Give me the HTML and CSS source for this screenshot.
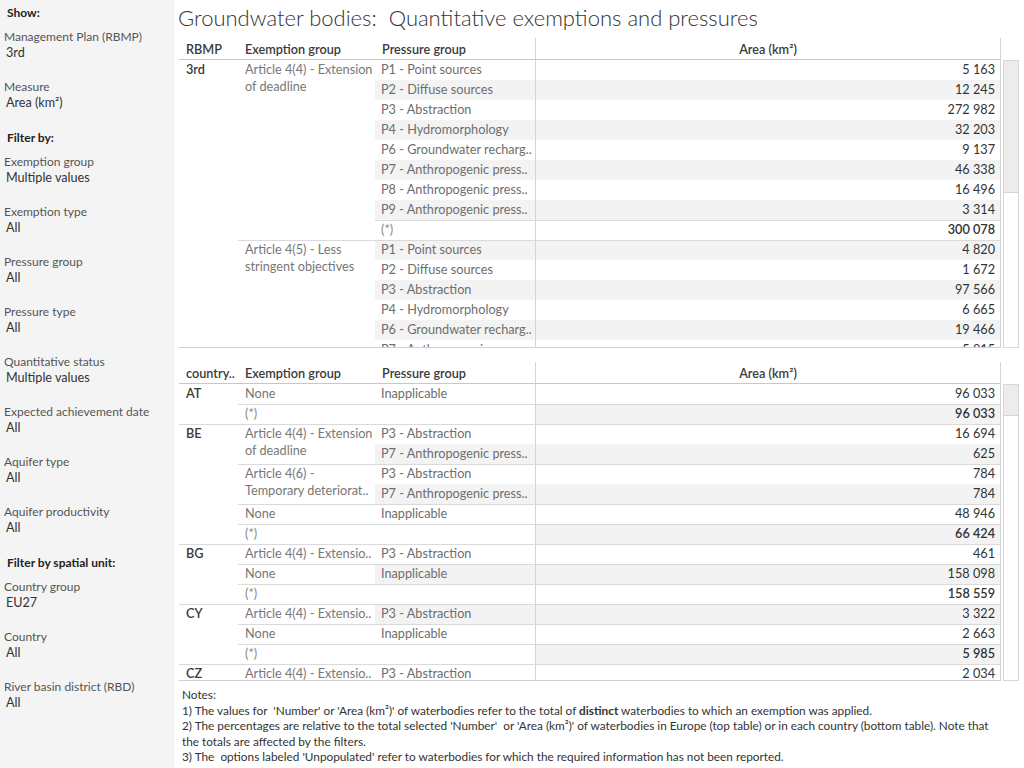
FILE: index.html
```html
<!DOCTYPE html>
<html lang="en">
<head>
  <meta charset="UTF-8">
  <meta name="viewport" content="width=device-width, initial-scale=1.0">
  <title>Groundwater bodies: Quantitative exemptions and pressures</title>
  <link rel="stylesheet" href="styles.css">
</head>
<body>
<aside class="filters">
  <div class="filters-heading">Show:</div>
  <div class="filter"><div class="filter-label">Management Plan (RBMP)</div><div class="filter-value">3rd</div></div>
  <div class="filter"><div class="filter-label">Measure</div><div class="filter-value">Area (km²)</div></div>

  <div class="filters-heading">Filter by:</div>
  <div class="filter"><div class="filter-label">Exemption group</div><div class="filter-value">Multiple values</div></div>
  <div class="filter"><div class="filter-label">Exemption type</div><div class="filter-value">All</div></div>
  <div class="filter"><div class="filter-label">Pressure group</div><div class="filter-value">All</div></div>
  <div class="filter"><div class="filter-label">Pressure type</div><div class="filter-value">All</div></div>
  <div class="filter"><div class="filter-label">Quantitative status</div><div class="filter-value">Multiple values</div></div>
  <div class="filter"><div class="filter-label">Expected achievement date</div><div class="filter-value">All</div></div>
  <div class="filter"><div class="filter-label">Aquifer type</div><div class="filter-value">All</div></div>
  <div class="filter"><div class="filter-label">Aquifer productivity</div><div class="filter-value">All</div></div>

  <div class="filters-heading">Filter by spatial unit:</div>
  <div class="filter"><div class="filter-label">Country group</div><div class="filter-value">EU27</div></div>
  <div class="filter"><div class="filter-label">Country</div><div class="filter-value">All</div></div>
  <div class="filter"><div class="filter-label">River basin district (RBD)</div><div class="filter-value">All</div></div>
</aside>

<main class="dashboard">
  <h1 class="title">Groundwater bodies:&nbsp; Quantitative exemptions and pressures</h1>

  <!-- Europe total, by plan / exemption / pressure -->
  <section class="sheet">
    <div class="sheet-head">
      <div class="hd">RBMP</div>
      <div class="hd">Exemption group</div>
      <div class="hd">Pressure group</div>
      <div class="hd hd-val">Area (km²)</div>
    </div>
    <div class="sheet-body">
      <div class="viewport viewport-top">
        <div class="grid">
          <div class="c dim" style="grid-row: span 20">3rd</div>

          <div class="c ex" style="grid-row: span 9">Article 4(4) - Extension<br>of deadline</div>
          <div class="c pr">P1 - Point sources</div><div class="c val">5 163</div>
          <div class="c pr band">P2 - Diffuse sources</div><div class="c val band">12 245</div>
          <div class="c pr">P3 - Abstraction</div><div class="c val">272 982</div>
          <div class="c pr band">P4 - Hydromorphology</div><div class="c val band">32 203</div>
          <div class="c pr">P6 - Groundwater recharg..</div><div class="c val">9 137</div>
          <div class="c pr band">P7 - Anthropogenic press..</div><div class="c val band">46 338</div>
          <div class="c pr">P8 - Anthropogenic press..</div><div class="c val">16 496</div>
          <div class="c pr band">P9 - Anthropogenic press..</div><div class="c val band">3 314</div>
          <div class="c pr top muted">(*)</div><div class="c val top tot">300 078</div>

          <div class="c ex top" style="grid-row: span 9">Article 4(5) - Less<br>stringent objectives</div>
          <div class="c pr top band">P1 - Point sources</div><div class="c val top band">4 820</div>
          <div class="c pr">P2 - Diffuse sources</div><div class="c val">1 672</div>
          <div class="c pr band">P3 - Abstraction</div><div class="c val band">97 566</div>
          <div class="c pr">P4 - Hydromorphology</div><div class="c val">6 665</div>
          <div class="c pr band">P6 - Groundwater recharg..</div><div class="c val band">19 466</div>
          <div class="c pr">P7 - Anthropogenic press..</div><div class="c val">5 815</div>
          <div class="c pr band">P8 - Anthropogenic press..</div><div class="c val band">2 104</div>
          <div class="c pr">P9 - Anthropogenic press..</div><div class="c val">412</div>
          <div class="c pr top band muted">(*)</div><div class="c val top band tot">118 620</div>

          <div class="c ex top" style="grid-row: span 2">Article 4(6) -<br>Temporary deteriorat..</div>
          <div class="c pr top">P3 - Abstraction</div><div class="c val top">784</div>
          <div class="c pr top band muted">(*)</div><div class="c val top band tot">784</div>
        </div>
      </div>
      <div class="scrollbar"><div class="thumb thumb-top"></div></div>
    </div>
  </section>

  <!-- Same figures broken down per country -->
  <section class="sheet sheet-country">
    <div class="sheet-head">
      <div class="hd">country..</div>
      <div class="hd">Exemption group</div>
      <div class="hd">Pressure group</div>
      <div class="hd hd-val">Area (km²)</div>
    </div>
    <div class="sheet-body">
      <div class="viewport viewport-country">
        <div class="grid">
          <div class="c dim" style="grid-row: span 2">AT</div>
          <div class="c ex">None</div><div class="c pr">Inapplicable</div><div class="c val">96 033</div>
          <div class="c ex top muted">(*)</div><div class="c pr top"></div><div class="c val top band tot">96 033</div>

          <div class="c dim top" style="grid-row: span 6">BE</div>
          <div class="c ex top" style="grid-row: span 2">Article 4(4) - Extension<br>of deadline</div>
          <div class="c pr top">P3 - Abstraction</div><div class="c val top">16 694</div>
          <div class="c pr band">P7 - Anthropogenic press..</div><div class="c val band">625</div>
          <div class="c ex top" style="grid-row: span 2">Article 4(6) -<br>Temporary deteriorat..</div>
          <div class="c pr top">P3 - Abstraction</div><div class="c val top">784</div>
          <div class="c pr band">P7 - Anthropogenic press..</div><div class="c val band">784</div>
          <div class="c ex top">None</div><div class="c pr top">Inapplicable</div><div class="c val top">48 946</div>
          <div class="c ex top muted">(*)</div><div class="c pr top"></div><div class="c val top band tot">66 424</div>

          <div class="c dim top" style="grid-row: span 3">BG</div>
          <div class="c ex top">Article 4(4) - Extensio..</div><div class="c pr top">P3 - Abstraction</div><div class="c val top">461</div>
          <div class="c ex top">None</div><div class="c pr top band">Inapplicable</div><div class="c val top band">158 098</div>
          <div class="c ex top muted">(*)</div><div class="c pr top"></div><div class="c val top tot">158 559</div>

          <div class="c dim top" style="grid-row: span 3">CY</div>
          <div class="c ex top">Article 4(4) - Extensio..</div><div class="c pr top band">P3 - Abstraction</div><div class="c val top band">3 322</div>
          <div class="c ex top">None</div><div class="c pr top">Inapplicable</div><div class="c val top">2 663</div>
          <div class="c ex top muted">(*)</div><div class="c pr top"></div><div class="c val top band tot">5 985</div>

          <div class="c dim top" style="grid-row: span 3">CZ</div>
          <div class="c ex top">Article 4(4) - Extensio..</div><div class="c pr top">P3 - Abstraction</div><div class="c val top">2 034</div>
          <div class="c ex top">None</div><div class="c pr top band">Inapplicable</div><div class="c val top band">1 120</div>
          <div class="c ex top muted">(*)</div><div class="c pr top"></div><div class="c val top tot">3 154</div>
        </div>
      </div>
      <div class="scrollbar"><div class="thumb thumb-country"></div></div>
    </div>
  </section>

  <div class="notes">
    <p>Notes:</p>
    <p>1) The values for &nbsp;'Number' or 'Area (km²)' of waterbodies refer to the total of <b>distinct</b> waterbodies to which an exemption was applied.</p>
    <p>2) The percentages are relative to the total selected 'Number' &nbsp;or 'Area (km²)' of waterbodies in Europe (top table) or in each country (bottom table). Note that<br>the totals are affected by the filters.</p>
    <p>3) The &nbsp;options labeled 'Unpopulated' refer to waterbodies for which the required information has not been reported.</p>
  </div>
</main>
</body>
</html>
```

FILE: styles.css
```css
body {
  margin: 0;
  height: 768px;
  overflow: hidden;
  display: flex;
  font-family: Lato, 'Liberation Sans', sans-serif;
  font-size: 12px;
  color: #333;
  background: #fff;
}

/* Left filter panel */
.filters {
  width: 175px;
  flex-shrink: 0;
  background: #f4f4f4;
  box-sizing: border-box;
  padding-left: 4px;
}

.filters-heading {
  padding: 6px 0 3px 3px;
  line-height: 16px;
  font-weight: bold;
  color: #222;
}

.filters-heading:first-child {
  padding-top: 5px;
}

.filter {
  padding: 5px 0 13px;
  line-height: 16px;
}

.filter-label {
  color: #555;
}

.filter-value {
  padding-left: 2px;
  font-size: 12.6px;
  color: #333;
}

/* Main dashboard area */
.dashboard {
  flex: 1;
  padding: 0 5px 0 4px;
  min-width: 0;
}

.title {
  margin: 0 0 0 -1px;
  height: 38px;
  line-height: 36px;
  font-size: 22px;
  font-weight: 300;
  color: #333;
  white-space: nowrap;
}

.sheet-country {
  margin-top: 14px;
}

.sheet-head,
.grid {
  display: grid;
  grid-template-columns: 59px 137px 160px 1fr;
}

.sheet-head {
  margin-right: 18px;
  height: 21px;
  border-bottom: 1px solid #c8c8c8;
}

.hd {
  padding: 3px 0 0 7px;
  line-height: 17px;
  font-size: 12.7px;
  font-weight: 600;
  color: #3a3a3a;
  white-space: nowrap;
}

.hd-val {
  padding-left: 0;
  text-align: center;
  border-left: 1px solid #d4d4d4;
  border-right: 1px solid #d4d4d4;
}

.sheet-body {
  display: flex;
}

.viewport {
  flex: 1;
  overflow: hidden;
  border-bottom: 1px solid #d0d0d0;
}

.viewport-top {
  height: 287px;
}

.viewport-country {
  height: 296px;
}

.grid {
  grid-auto-rows: 20px;
}

/* Table cells */
.c {
  box-sizing: border-box;
  padding: 1px 0 0 7px;
  line-height: 17px;
  font-size: 12.7px;
  white-space: nowrap;
  overflow: hidden;
}

.dim {
  font-weight: 600;
  color: #3a3a3a;
}

.ex {
  color: #777;
}

.pr {
  padding-left: 6px;
  color: #6e6e6e;
}

.muted {
  color: #888;
}

.val {
  padding-right: 5px;
  text-align: right;
  color: #333;
  border-left: 1px solid #d4d4d4;
  border-right: 1px solid #d4d4d4;
}

.tot {
  font-weight: 600;
}

.band {
  background: #f3f3f3;
}

.top {
  border-top: 1px solid #dadada;
  padding-top: 0;
}

/* Fake scrollbars beside the tables */
.scrollbar {
  width: 16px;
  margin-left: 2px;
  box-sizing: border-box;
  border: 1px solid #d8d8d8;
  background: #fff;
}

.thumb {
  background: #ececec;
  border-bottom: 1px solid #d4d4d4;
}

.thumb-top {
  height: 131px;
}

.thumb-country {
  height: 30px;
}

/* Footnotes */
.notes {
  margin-top: 6px;
  padding-left: 3px;
  font-size: 11.8px;
  line-height: 15.5px;
  color: #333;
  white-space: nowrap;
}

.notes p {
  margin: 0;
}
```
